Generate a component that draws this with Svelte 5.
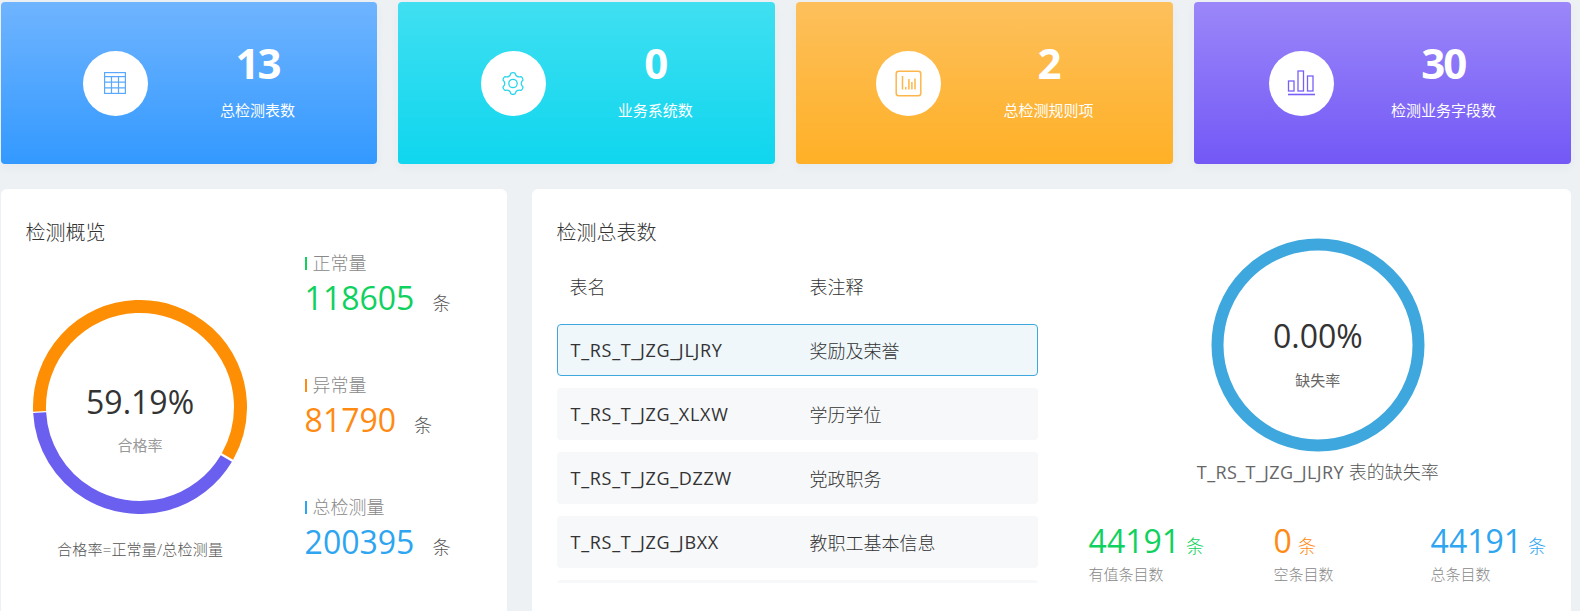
<script lang="ts">
  const cards = [
    { tone: "blue", value: 13, label: "总检测表数" },
    { tone: "cyan", value: 0, label: "业务系统数" },
    { tone: "orange", value: 2, label: "总检测规则项" },
    { tone: "purple", value: 30, label: "检测业务字段数" },
  ];

  const totals = [
    { tone: "green", label: "正常量", value: 118605 },
    { tone: "amber", label: "异常量", value: 81790 },
    { tone: "sky", label: "总检测量", value: 200395 },
  ];

  // the fifth row only peeks out under the scroll edge, so it stays empty here
  const rows = [
    { name: "T_RS_T_JZG_JLJRY", note: "奖励及荣誉" },
    { name: "T_RS_T_JZG_XLXW", note: "学历学位" },
    { name: "T_RS_T_JZG_DZZW", note: "党政职务" },
    { name: "T_RS_T_JZG_JBXX", note: "教职工基本信息" },
    { name: "", note: "" },
  ];

  const counts = [
    { tone: "green", value: 44191, label: "有值条目数" },
    { tone: "amber", value: 0, label: "空条目数" },
    { tone: "sky", value: 44191, label: "总条目数" },
  ];

  let selected = 0;

  // six lobed gear outline around (12,12.5)
  function gearPath() {
    const pt = (deg: number, r: number) => {
      const a = (deg * Math.PI) / 180;
      return `${(12 + r * Math.cos(a)).toFixed(2)} ${(12.5 + r * Math.sin(a)).toFixed(2)}`;
    };
    let d = "";
    for (let k = 0; k < 6; k++) {
      const tip = -90 + k * 60;
      d += `${k === 0 ? "M" : "L"}${pt(tip - 11, 10.6)} Q${pt(tip, 11.4)} ${pt(tip + 11, 10.6)} Q${pt(tip + 30, 6.4)} ${pt(tip + 49, 10.6)} `;
    }
    return d + "Z";
  }
</script>

<div class="page">
  <section class="cards">
    {#each cards as card}
      <div class="card {card.tone}">
        <div class="badge">
          {#if card.tone === "blue"}
            <svg width="24" height="24" viewBox="0 0 24 24" fill="none" stroke="#5aa8ff" stroke-width="1.2">
              <rect x="1.6" y="1.6" width="20.8" height="20.8" />
              <path d="M1.6 5.6h20.8M1.6 11.2h20.8M1.6 16.8h20.8M8.5 5.6v16.8M15.5 5.6v16.8" />
            </svg>
          {:else if card.tone === "cyan"}
            <svg width="24" height="24" viewBox="0 0 24 24" fill="none" stroke="#27d6ee" stroke-width="1.3" stroke-linejoin="round">
              <path d={gearPath()} />
              <circle cx="12" cy="12.5" r="4.2" />
            </svg>
          {:else if card.tone === "orange"}
            <svg width="27" height="27" viewBox="0 0 27 27" fill="none" stroke="#fdb64b">
              <rect x="1.2" y="1.2" width="24.6" height="24.6" rx="2.5" stroke-width="1.5" />
              <path stroke-width="1.5" d="M7.5 6v13.5M10.8 17v2.5M13.9 9v10.5M16.9 12v7.5M20 8.5v11" />
            </svg>
          {:else}
            <svg width="29" height="26" viewBox="0 0 29 26" fill="none" stroke="#7a5ff7" stroke-width="1.3">
              <rect x="1.5" y="11" width="5.5" height="10" />
              <rect x="11" y="1" width="5.5" height="20" />
              <rect x="20.5" y="6" width="5.5" height="15" />
              <path stroke-width="1.6" d="M1 24.5h27" />
            </svg>
          {/if}
        </div>
        <div class="card-text">
          <div class="card-value">{card.value}</div>
          <div class="card-label">{card.label}</div>
        </div>
      </div>
    {/each}
  </section>

  <section class="panels">
    <div class="panel overview">
      <h2 class="title">检测概览</h2>
      <div class="overview-body">
        <div class="ring-col">
          <div class="ring">
            <svg width="214" height="214" viewBox="0 0 214 214" fill="none" stroke-width="13">
              <circle cx="107" cy="107" r="100.5" pathLength="360" stroke="#fe8e04" stroke-dasharray="212 148" transform="rotate(177.5 107 107)" />
              <circle cx="107" cy="107" r="100.5" pathLength="360" stroke="#6b5ff0" stroke-dasharray="146 214" transform="rotate(30.8 107 107)" />
            </svg>
            <div class="ring-text">
              <div class="ring-value">59.19%</div>
              <div class="ring-label">合格率</div>
            </div>
          </div>
          <p class="formula">合格率=正常量/总检测量</p>
        </div>
        <ul class="totals">
          {#each totals as item}
            <li class="total {item.tone}">
              <div class="total-label">{item.label}</div>
              <div class="total-line">
                <span class="total-value">{item.value}</span>
                <span class="total-unit">条</span>
              </div>
            </li>
          {/each}
        </ul>
      </div>
    </div>

    <div class="panel detail">
      <div class="tables">
        <h2 class="title">检测总表数</h2>
        <div class="table-head">
          <span class="col-name">表名</span>
          <span>表注释</span>
        </div>
        <div class="table-rows">
          {#each rows as row, i}
            <div class="table-row" class:active={i === selected}>
              <span class="col-name">{row.name}</span>
              <span>{row.note}</span>
            </div>
          {/each}
        </div>
      </div>

      <div class="missing">
        <div class="ring thin">
          <svg width="214" height="214" viewBox="0 0 214 214" fill="none">
            <circle cx="107" cy="107" r="100.5" stroke="#3ea7de" stroke-width="12" />
          </svg>
          <div class="ring-text">
            <div class="ring-value">0.00%</div>
            <div class="ring-label dark">缺失率</div>
          </div>
        </div>
        <p class="missing-caption"><span class="code">{rows[selected].name}</span> 表的缺失率</p>
        <div class="counts">
          {#each counts as item}
            <div class="count {item.tone}">
              <div class="count-line">
                <span class="count-value">{item.value}</span>
                <span class="count-unit">条</span>
              </div>
              <div class="count-label">{item.label}</div>
            </div>
          {/each}
        </div>
      </div>
    </div>
  </section>
</div>

<style>
  :global(body) {
    margin: 0;
    background: #edf1f4;
    font-family: "Open Sans", "Noto Sans CJK SC", sans-serif;
    color: #333;
  }

  .page {
    height: 611px;
    box-sizing: border-box;
    padding: 2px 9px 0 0.6px;
    display: flex;
    flex-direction: column;
    overflow: hidden;
  }

  .cards {
    display: grid;
    grid-template-columns: repeat(4, 376.8px);
    gap: 21px;
  }

  .card {
    height: 162px;
    border-radius: 4px;
    display: flex;
    justify-content: center;
    align-items: center;
    color: #fff;
    box-shadow: 0 4px 10px rgba(60, 80, 110, 0.04);
  }

  .blue { gap: 72px; background: linear-gradient(#6fb4ff, #3399ff); }
  .cyan { gap: 72px; background: linear-gradient(#40dff1, #0fd6ee); }
  .orange { gap: 63px; background: linear-gradient(#fdc05c, #ffb026); }
  .purple { gap: 57px; background: linear-gradient(#9b87f9, #7358f6); }

  .badge {
    width: 65px;
    height: 65px;
    border-radius: 50%;
    background: #fff;
    display: flex;
    align-items: center;
    justify-content: center;
  }

  .card-text {
    text-align: center;
    margin-bottom: 8px;
  }

  .card-value {
    font-size: 42px;
    font-weight: 700;
    letter-spacing: -2px;
    line-height: 48px;
  }

  .card-label {
    font-size: 15px;
    line-height: 20px;
    margin-top: 13px;
  }

  .panels {
    flex: 1;
    display: flex;
    gap: 25px;
    margin-top: 25px;
    min-height: 0;
  }

  .panel {
    background: #fff;
    border-radius: 6px 6px 0 0;
    box-sizing: border-box;
  }

  .title {
    margin: 0;
    font-size: 20px;
    font-weight: 300;
    line-height: 28px;
  }

  .overview {
    width: 506px;
    padding: 30px 0 0 25px;
  }

  .overview-body {
    display: flex;
    gap: 50px;
  }

  .ring-col {
    width: 229px;
    padding-top: 53px;
    display: flex;
    flex-direction: column;
    align-items: center;
  }

  .ring {
    position: relative;
    width: 214px;
    height: 214px;
  }

  .ring svg {
    display: block;
  }

  .ring-text {
    position: absolute;
    inset: 0;
    text-align: center;
  }

  .ring-value {
    margin-top: 80px;
    font-size: 32px;
    line-height: 44px;
    color: #333;
  }

  .ring-label {
    margin-top: 11px;
    font-size: 15px;
    line-height: 20px;
    color: #999;
  }

  .ring-label.dark {
    margin-top: 12px;
    color: #666;
  }

  .formula {
    margin: 25px 0 0;
    font-size: 15px;
    font-weight: 300;
    letter-spacing: 0.2px;
    line-height: 20px;
    color: #555;
  }

  .totals {
    list-style: none;
    margin: 0;
    padding: 4px 0 0;
    display: flex;
    flex-direction: column;
    gap: 62px;
  }

  .total {
    height: 60px;
  }

  .green { --tone: #0fd15e; }
  .amber { --tone: #ff8a12; }
  .sky { --tone: #2da5f0; }

  .total-label {
    font-size: 18px;
    font-weight: 300;
    line-height: 24px;
    color: #888;
    padding-left: 8px;
    position: relative;
  }

  .total-label::before {
    content: "";
    position: absolute;
    left: 0;
    top: 6px;
    width: 2px;
    height: 13px;
    background: var(--tone);
  }

  .total-line {
    display: flex;
    align-items: baseline;
    gap: 18px;
    line-height: 46px;
  }

  .total-value {
    font-size: 32px;
    color: var(--tone);
  }

  .total-unit {
    font-size: 18px;
    font-weight: 300;
    color: #555;
  }

  .detail {
    flex: 1;
    display: flex;
    padding: 30px 0 0 25px;
  }

  .tables {
    width: 481px;
    flex: none;
  }

  .table-head {
    display: flex;
    height: 44px;
    margin-top: 22px;
    padding-left: 13px;
    align-items: flex-start;
    font-size: 18px;
    font-weight: 300;
    line-height: 36px;
  }

  .col-name {
    width: 239px;
    flex: none;
    font-weight: 400;
    letter-spacing: 0.7px;
  }

  .table-head .col-name {
    width: 240px;
    font-weight: 300;
    letter-spacing: 0;
  }

  .table-rows {
    margin-top: 11px;
    height: 259px;
    overflow: hidden;
    display: flex;
    flex-direction: column;
    gap: 12px;
  }

  .table-row {
    height: 52px;
    flex: none;
    box-sizing: border-box;
    display: flex;
    align-items: center;
    padding-left: 14px;
    font-size: 18px;
    font-weight: 300;
    border-radius: 4px;
    background: #f7f8fa;
  }

  .table-row.active {
    background: #eff7fb;
    border: 1px solid #3ea7de;
    padding-left: 13px;
  }

  .missing {
    flex: 1;
    min-width: 0;
    display: flex;
    flex-direction: column;
    align-items: center;
    padding: 19px 0 0 27px;
  }

  .thin .ring-value {
    margin-top: 76px;
  }

  .missing-caption {
    margin: 7px 0 0;
    font-size: 18px;
    font-weight: 300;
    line-height: 26px;
    color: #555;
  }

  .code {
    font-weight: 400;
    letter-spacing: 0.4px;
    color: #666;
  }

  .counts {
    width: 100%;
    box-sizing: border-box;
    margin-top: 38px;
    padding-left: 24px;
    display: grid;
    grid-template-columns: 185px 157px 1fr;
  }

  .count-line {
    display: flex;
    align-items: baseline;
    gap: 6px;
    line-height: 35px;
    color: var(--tone);
  }

  .count-value {
    font-size: 32px;
  }

  .count-unit {
    font-size: 18px;
    font-weight: 300;
  }

  .count-label {
    font-size: 15px;
    font-weight: 300;
    line-height: 20px;
    color: #888;
  }
</style>
